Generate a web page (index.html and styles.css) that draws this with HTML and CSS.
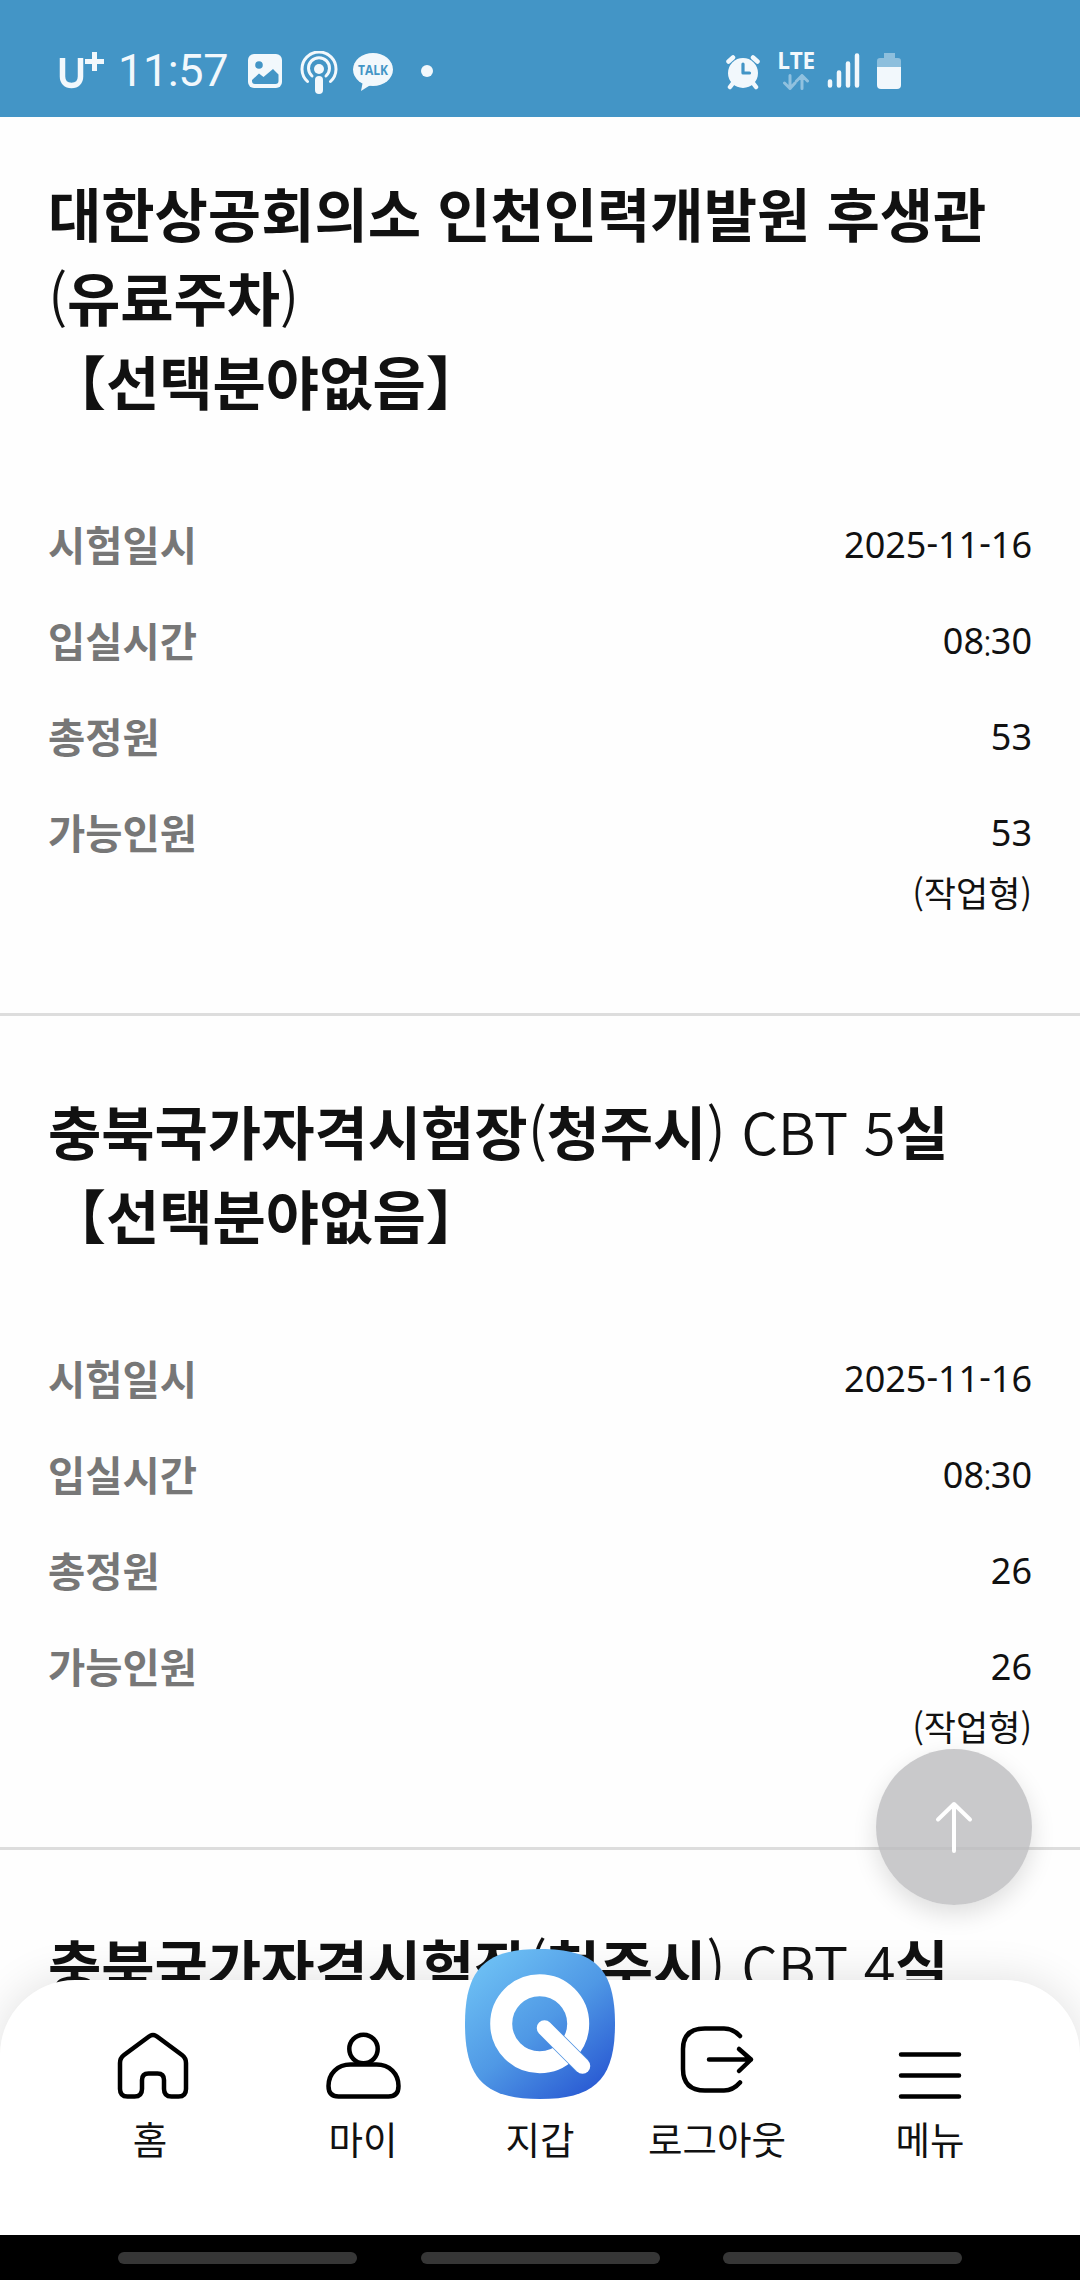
FILE: index.html
```html
<!DOCTYPE html>
<html lang="ko">
<head>
  <meta charset="UTF-8" />
  <meta name="viewport" content="width=device-width, initial-scale=1.0"/>
  <title>시험장 조회</title>
  <link rel="stylesheet" href="styles.css">
</head>
<body>
  <div class="screen">
    <header class="status-bar">
      <div class="status-left">
        <svg class="carrier" width="46" height="40" viewBox="0 0 46 40">
          <path d="M4.500 7v18.500c0 5.500 3.500 9 9 9s9-3.500 9-9V7" fill="none" stroke="#f2f8fc" stroke-width="5.500"/>
          <path d="M27 10.500h19M36.500 1v19" fill="none" stroke="#f2f8fc" stroke-width="5"/>
        </svg>
        <span class="clock">11:57</span>
        <svg class="ico-photo" width="34" height="34" viewBox="0 0 34 34">
          <rect width="34" height="34" rx="6" fill="#f2f8fc"/>
          <circle cx="11" cy="11" r="3.800" fill="#4395c6"/>
          <path d="M4 26l7-6.500 4.500 3.500L25 15l5.500 5.500V27q0 3-3 3H7q-3 0-3-3z" fill="#4395c6"/>
        </svg>
        <svg class="ico-cast" width="38" height="44" viewBox="0 0 38 44">
          <g fill="none" stroke="#f2f8fc" stroke-width="3" stroke-linecap="round">
            <path d="M7.500 30.500a17 17 0 1 1 23 0"/>
            <path d="M12 25a10.500 10.500 0 1 1 14 0"/>
          </g>
          <circle cx="19" cy="18" r="5" fill="#f2f8fc"/>
          <rect x="15" y="25" width="8" height="18" rx="4" fill="#f2f8fc"/>
        </svg>
        <svg class="ico-talk" width="40" height="38" viewBox="0 0 40 38">
          <ellipse cx="20" cy="16.500" rx="20" ry="16.500" fill="#f2f8fc"/>
          <path d="M10 28L8 38l11-7z" fill="#f2f8fc"/>
          <text x="20" y="22" class="talk-text" text-anchor="middle" textLength="30" lengthAdjust="spacingAndGlyphs">TALK</text>
        </svg>
        <span class="dot"></span>
      </div>
      <div class="status-right">
        <svg class="ico-alarm" width="34" height="36" viewBox="0 0 34 36">
          <g stroke="#f2f8fc" stroke-width="4.500" stroke-linecap="round">
            <path d="M2.500 7.500l4.500-4M31.500 7.500L27 3.500M7 29l-3 4M27 29l3 4"/>
          </g>
          <circle cx="17" cy="19" r="15" fill="#f2f8fc"/>
          <path d="M17 10v9h6.500" fill="none" stroke="#4395c6" stroke-width="3.200" stroke-linecap="round" stroke-linejoin="round"/>
        </svg>
        <div class="lte">
          <span>LTE</span>
          <svg width="28" height="16" viewBox="0 0 28 16" fill="none" stroke="#90c1df" stroke-width="3" stroke-linecap="round" stroke-linejoin="round">
            <path d="M8 1.500v13M2.500 9l5.500 5.500L13 9M20 14.500v-13M14.500 7L20 1.500 25.500 7"/>
          </svg>
        </div>
        <svg class="ico-signal" width="33" height="35" viewBox="0 0 33 35" stroke="#f2f8fc" stroke-width="4.500" stroke-linecap="round">
          <path d="M3 28.500v4M12 19.500v13M21 10.500v22M30 2.500v30"/>
        </svg>
        <svg class="ico-battery" width="24" height="36" viewBox="0 0 24 36">
          <path d="M7 5V0h11v5h3q3 0 3 3v6H0V8q0-3 3-3z" fill="#8dbfdd"/>
          <path d="M0 14h24v18q0 4-4 4H4q-4 0-4-4z" fill="#f2f8fc"/>
        </svg>
      </div>
    </header>

    <main class="list">
      <section class="place first">
        <h2>대한상공회의소 인천인력개발원 후생관<br><span class="latin">(</span>유료주차<span class="latin">)</span><br><span class="field">【선택분야없음】</span></h2>
        <dl>
          <div class="row"><dt>시험일시</dt><dd>2025<span class="dash">-</span>11<span class="dash">-</span>16</dd></div>
          <div class="row"><dt>입실시간</dt><dd>08<span class="colon">:</span>30</dd></div>
          <div class="row"><dt>총정원</dt><dd>53</dd></div>
          <div class="row"><dt>가능인원</dt><dd>53<span class="type"><span class="paren">(</span>작업형<span class="paren">)</span></span></dd></div>
        </dl>
      </section>

      <section class="place">
        <h2>충북국가자격시험장<span class="latin">(</span>청주시<span class="latin">) CBT 5</span>실<br><span class="field">【선택분야없음】</span></h2>
        <dl>
          <div class="row"><dt>시험일시</dt><dd>2025<span class="dash">-</span>11<span class="dash">-</span>16</dd></div>
          <div class="row"><dt>입실시간</dt><dd>08<span class="colon">:</span>30</dd></div>
          <div class="row"><dt>총정원</dt><dd>26</dd></div>
          <div class="row"><dt>가능인원</dt><dd>26<span class="type"><span class="paren">(</span>작업형<span class="paren">)</span></span></dd></div>
        </dl>
      </section>

      <section class="place">
        <h2>충북국가자격시험장<span class="latin">(</span>청주시<span class="latin">) CBT 4</span>실</h2>
      </section>
    </main>

    <button class="top-btn" aria-label="맨 위로">
      <svg width="40" height="52" viewBox="0 0 40 52" fill="none" stroke="#fff" stroke-width="4" stroke-linecap="round" stroke-linejoin="round">
        <path d="M20 50V3M4 18.500L20 3l16 15.500"/>
      </svg>
    </button>

    <nav class="tab-bar">
      <a class="tab home">
        <svg width="76" height="76" viewBox="0 0 76 76" fill="none" stroke="#000" stroke-width="4.500">
          <path d="M34 13.500q4-3 8 0l25 18.500q4 3 4 8v26q0 7.500-7.500 7.500h-7q-7.500 0-7.500-7.500V57q0-6.500-6.500-6.500h-9q-6.500 0-6.500 6.500v9q0 7.500-7.500 7.500h-7q-7.500 0-7.500-7.500V40q0-5 4-8z"/>
        </svg>
        <span>홈</span>
      </a>
      <a class="tab">
        <svg width="76" height="76" viewBox="0 0 76 76" fill="none" stroke="#000" stroke-width="4.500">
          <circle cx="38.500" cy="26" r="14.200"/>
          <path d="M25.500 41.500h26c13 0 22 9 22 21.500q0 10.500-10 10.500H13.500Q3.500 73.500 3.500 63c0-12.500 9-21.500 22-21.500z"/>
        </svg>
        <span>마이</span>
      </a>
      <a class="tab">
        <svg width="150" height="150" viewBox="0 0 150 150">
          <defs>
            <linearGradient id="wallet" x1="0.150" y1="0.100" x2="0.850" y2="0.950">
              <stop offset="0" stop-color="#6bbdf3"/>
              <stop offset="0.500" stop-color="#4f98e5"/>
              <stop offset="1" stop-color="#2a5bd3"/>
            </linearGradient>
          </defs>
          <path d="M75 0C130 0 150 20 150 75s-20 75-75 75S0 130 0 75 20 0 75 0z" fill="url(#wallet)"/>
          <circle cx="74.700" cy="74.700" r="38.500" fill="none" stroke="#fff" stroke-width="22"/>
          <path d="M79.500 79l38 38" stroke="#4a8fe2" stroke-width="17"/>
          <path d="M79.500 79l38 38" stroke="#fff" stroke-width="15.500" stroke-linecap="round"/>
        </svg>
        <span>지갑</span>
      </a>
      <a class="tab">
        <svg width="76" height="76" viewBox="0 0 76 76" fill="none" stroke="#000" stroke-width="4.500" stroke-linecap="round" stroke-linejoin="round">
          <path d="M61 13Q54 5.500 45 5.500H26Q4 5.500 4 26v20q0 21.500 22 21.500h19q9 0 16-8"/>
          <path d="M30 36.500h42M60 26l12 10.500L60 48"/>
        </svg>
        <span>로그아웃</span>
      </a>
      <a class="tab">
        <svg width="76" height="76" viewBox="0 0 76 76" stroke="#000" stroke-width="4.500" stroke-linecap="round">
          <path d="M9 31.500h58M9 52.500h58M9 73.500h58"/>
        </svg>
        <span>메뉴</span>
      </a>
    </nav>

    <footer class="system-bar">
      <i></i>
      <i></i>
      <i></i>
    </footer>
  </div>
</body>
</html>
```
FILE: styles.css
```css
* {
  box-sizing: border-box;
}

body {
  margin: 0;
  font-family: "Noto Sans", "Noto Sans CJK KR", sans-serif;
  background: #fff;
  color: #111;
}

.screen {
  position: relative;
  width: 1080px;
  height: 2280px;
  overflow: hidden;
  background: #fefefe;
}

/* status bar */
.status-bar {
  display: flex;
  justify-content: space-between;
  align-items: flex-start;
  height: 117px;
  padding: 51px 179px 0 58px;
  background: #4395c6;
  color: #f2f8fc;
}

.status-left,
.status-right {
  display: flex;
  align-items: flex-start;
}

.clock {
  width: 112px;
  margin: -3px 0 0 14px;
  font: 45px/46px Roboto, sans-serif;
  letter-spacing: -0.4px;
}

.ico-photo {
  margin: 3px 0 0 18px;
}

.ico-cast {
  margin-left: 18px;
}

.ico-talk {
  margin: 2px 0 0 15px;
}

.talk-text {
  font: bold 14.5px "Open Sans", sans-serif;
  fill: #4395c6;
}

.dot {
  width: 12px;
  height: 12px;
  margin: 14px 0 0 28px;
  border-radius: 50%;
  background: #f2f8fc;
}

.ico-alarm {
  margin-top: 3px;
}

.lte {
  display: flex;
  flex-direction: column;
  align-items: center;
  width: 36px;
  margin: 1px 0 0 18px;
  font: bold 22.5px/18px "Open Sans", sans-serif;
  letter-spacing: -0.3px;
}

.lte svg {
  margin-top: 4px;
}

.ico-signal {
  margin: 2px 0 0 13px;
}

.ico-battery {
  margin: 2px 0 0 17px;
}

/* exam places */
.place {
  padding: 72px 48px 90px;
  border-bottom: 3px solid #ddd;
}

.place.first {
  padding-top: 53px;
}

h2 {
  margin: 0 0 93px;
  font-family: "Noto Sans CJK KR", sans-serif;
  font-size: 58px;
  line-height: 84px;
  font-weight: 700;
  letter-spacing: -0.07px;
  white-space: nowrap;
}

.latin {
  font-weight: 350;
  letter-spacing: -0.3px;
}

dl {
  margin: 0;
}

.row {
  display: flex;
  justify-content: space-between;
  height: 60px;
  margin-bottom: 36px;
  line-height: 60px;
}

.row:last-child {
  height: 120px;
  margin-bottom: 0;
}

dt {
  font-family: "Noto Sans CJK KR", sans-serif;
  font-size: 40.5px;
  font-weight: 700;
  line-height: 57px;
  color: #777;
}

dd {
  margin: 0;
  font-size: 36px;
  text-align: right;
}

.dash {
  line-height: 1;
  vertical-align: 3px;
}

.colon {
  margin: 0 -1px;
  line-height: 1;
  vertical-align: -2px;
  font-weight: 300;
}

.type {
  display: block;
  font-family: "Noto Sans CJK KR", sans-serif;
  font-size: 35px;
  line-height: 58px;
  font-weight: 400;
}

.paren {
  font-weight: 350;
}

.top-btn {
  position: absolute;
  top: 1749px;
  right: 48px;
  display: flex;
  justify-content: center;
  align-items: center;
  width: 156px;
  height: 156px;
  border: none;
  border-radius: 50%;
  background: rgba(186, 186, 188, 0.78);
  box-shadow: 0 9px 24px rgba(0, 0, 0, 0.13);
}

/* bottom tabs */
.tab-bar {
  position: absolute;
  left: 0;
  bottom: 45px;
  display: grid;
  grid-template-columns: 213px 213px 141px 213px 213px;
  justify-content: center;
  width: 100%;
  height: 255px;
  border-radius: 75px 75px 0 0;
  background: #fff;
  box-shadow: 0 0 45px rgba(0, 0, 0, 0.12);
}

.tab {
  display: flex;
  flex-direction: column;
  justify-content: flex-end;
  align-items: center;
  height: 185px;
  font: 37.5px/54px "Noto Sans CJK KR", sans-serif;
}

.tab svg {
  flex: none;
  margin-bottom: 12px;
}

.home svg {
  margin-left: 6px;
}

.system-bar {
  position: absolute;
  left: 0;
  bottom: 0;
  display: flex;
  align-items: center;
  gap: 63.5px;
  width: 100%;
  height: 45px;
  padding-left: 118px;
  background: #000;
}

.system-bar i {
  width: 239px;
  height: 12px;
  border-radius: 6px;
  background: #363636;
}
```
